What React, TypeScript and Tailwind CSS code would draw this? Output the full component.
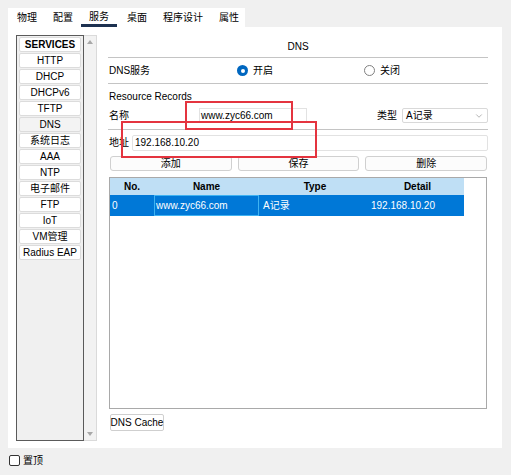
import { ChevronDown } from 'lucide-react';

const tabs = ['物理', '配置', '服务', '桌面', '程序设计', '属性'];
const services = ['HTTP', 'DHCP', 'DHCPv6', 'TFTP', 'DNS', '系统日志', 'AAA', 'NTP', '电子邮件', 'FTP', 'IoT', 'VM管理', 'Radius EAP'];

function Radio({ checked }: { checked: boolean }) {
  if (checked) {
    return (
      <span className="w-[11px] h-[11px] rounded-full bg-[#0067c0] flex items-center justify-center">
        <span className="w-[4px] h-[4px] rounded-full bg-white" />
      </span>
    );
  }
  return <span className="w-[11px] h-[11px] rounded-full border border-[#808080] bg-white" />;
}

export default function App() {
  return (
    <div className="w-[511px] h-[475px] bg-[#f0f0f0] pt-2 pl-2 text-[10px] leading-none text-black font-['Liberation_Sans','Noto_Sans_CJK_SC',sans-serif] overflow-hidden">
      {/* Tabs */}
      <div className="flex w-fit h-[19px] bg-white pl-px">
        {tabs.map((t) => (
          <div
            key={t}
            className={`h-full shrink-0 whitespace-nowrap flex items-center ${
              t === '服务' ? 'px-2 border-b-[3px] border-[#1d3150] pt-[2px] mr-[2px]' : t === '属性' ? 'pl-2 pr-[6px]' : 'px-2'
            }`}
          >
            {t}
          </div>
        ))}
      </div>

      {/* Panel */}
      <div className="flex w-[494px] h-[421px] bg-white pt-[8px] pl-2">
        {/* Service list */}
        <div className="flex h-[406px]">
          <div className="w-[68px] h-full border border-[#5a5a5a] bg-[#f0f0f0] px-[2px] pt-px flex flex-col gap-px">
            <div className="h-[15px] bg-white border border-[#dcdcdc] rounded-[2px] flex items-center justify-center font-bold">
              SERVICES
            </div>
            {services.map((s) => (
              <div
                key={s}
                className={`h-[15px] border border-[#dcdcdc] rounded-[2px] flex items-center justify-center ${
                  s === 'DNS' ? 'bg-[#f3f3f3]' : 'bg-white'
                }`}
              >
                {s}
              </div>
            ))}
          </div>
          <div className="w-[13px] h-full bg-[#f2f2f2] border border-l-0 border-[#dadada] flex flex-col items-center justify-between py-[4px]">
            <span className="w-0 h-0 border-l-[3px] border-r-[3px] border-b-[4px] border-l-transparent border-r-transparent border-b-[#a8a8a8]" />
            <span className="w-0 h-0 border-l-[3px] border-r-[3px] border-t-[4px] border-l-transparent border-r-transparent border-t-[#a8a8a8]" />
          </div>
        </div>

        {/* Main */}
        <div className="relative ml-[11px] w-[380px] flex flex-col">
          <div className="h-[23px] flex items-center justify-center border-b border-[#c4c4c4] pt-px">DNS</div>

          <div className="h-[26px] flex items-center border-b border-[#c4c4c4] pl-px">
            <span className="w-[128px]">DNS服务</span>
            <Radio checked />
            <span className="ml-[5px] w-[111px]">开启</span>
            <Radio checked={false} />
            <span className="ml-[5px]">关闭</span>
          </div>

          <div className="border-b border-[#c4c4c4] pb-[6px]">
            <div className="mt-[7px] h-[12px] flex items-center pl-px">Resource Records</div>
            <div className="mt-[5px] h-[15px] flex items-center pl-px">
              <span className="w-[90px]">名称</span>
              <div className="w-[108px] h-full border border-[#e2e2e2] flex items-center pl-px">www.zyc66.com</div>
              <span className="ml-[70px] w-[25px]">类型</span>
              <div className="w-[86px] h-full border border-[#d9d9d9] rounded-[2px] flex items-center justify-between pl-[3px] pr-[3px]">
                <span>A记录</span>
                <ChevronDown className="w-[10px] h-[10px] text-[#888]" strokeWidth={1.5} />
              </div>
            </div>
          </div>

          <div className="mt-[5px] h-[16px] flex items-center pl-px">
            <span className="w-[23px]">地址</span>
            <div className="flex-1 h-full border border-[#e2e2e2] rounded-[2px] flex items-center pl-[2px]">192.168.10.20</div>
          </div>

          <div className="mt-[5px] h-[15px] flex gap-[6px] pl-[2px] pr-[1px]">
            {['添加', '保存', '删除'].map((b) => (
              <div
                key={b}
                className="flex-1 h-full border border-[#d0d0d0] rounded-[3px] bg-[#fcfcfc] flex items-center justify-center"
              >
                {b}
              </div>
            ))}
          </div>

          {/* Table */}
          <div className="mt-[6px] ml-px w-[378px] h-[232px] border border-[#a9a9a9] bg-white">
            <div className="w-[354px] h-[17px] bg-[#bfdff5] flex items-center font-bold">
              <span className="w-[44px] text-center">No.</span>
              <span className="w-[105px] text-center">Name</span>
              <span className="w-[112px] text-center">Type</span>
              <span className="w-[93px] text-center">Detail</span>
            </div>
            <div className="w-[354px] h-[21px] bg-[#0078d7] text-white flex items-stretch">
              <span className="w-[44px] flex items-center pl-[2px]">0</span>
              <span className="w-[105px] flex items-center pl-px border border-[#3fb3f2]">www.zyc66.com</span>
              <span className="w-[112px] flex items-center pl-[4px]">A记录</span>
              <span className="w-[93px] flex items-center">192.168.10.20</span>
            </div>
          </div>

          <div className="mt-[5px] ml-[2px] w-[54px] h-[17px] border border-[#cfcfcf] rounded-[2px] bg-white flex items-center justify-center whitespace-nowrap">
            DNS Cache
          </div>

          {/* Annotation boxes */}
          <div className="absolute left-[77px] top-[66px] w-[108px] h-[29px] border-2 border-[#e4343f]" />
          <div className="absolute left-[13px] top-[86px] w-[196px] h-[37px] border-2 border-[#e4343f]" />
        </div>
      </div>

      {/* Bottom */}
      <div className="mt-[7px] flex items-center pl-px">
        <span className="w-[11px] h-[11px] border border-[#333] rounded-[2px] bg-white" />
        <span className="ml-[3px]">置顶</span>
      </div>
    </div>
  );
}
